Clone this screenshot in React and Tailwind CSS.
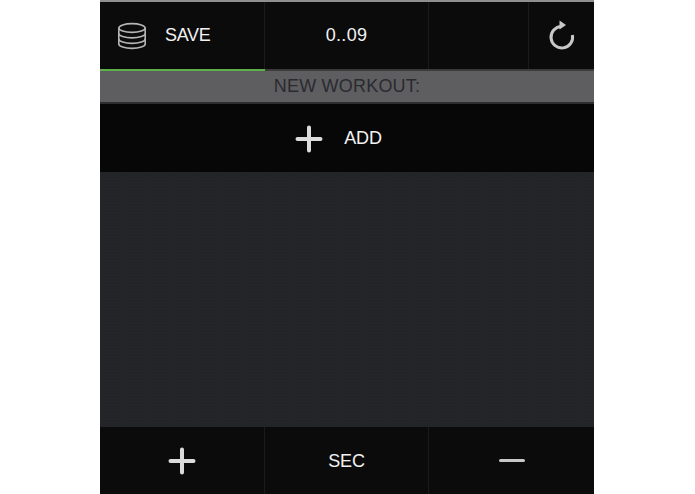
import React from "react";

const font = { fontFamily: '"Liberation Sans", Arial, sans-serif' };

const PlusIcon = ({ className }) => (
  <svg viewBox="0 0 28 28" className={className} fill="none" stroke="#dcdcdc" strokeWidth="4" strokeLinecap="round">
    <path d="M14 2.5v23M2.5 14h23" />
  </svg>
);

const DatabaseIcon = () => (
  <svg viewBox="0 0 30 28" className="w-[30px] h-[28px]" fill="none" stroke="#b5b5b5" strokeWidth="1.6">
    <ellipse cx="15" cy="6" rx="13.2" ry="4.4" />
    <path d="M1.8 6v16c0 2.4 5.9 4.4 13.2 4.4s13.2-2 13.2-4.4V6" />
    <path d="M1.8 11.5c0 2.4 5.9 4.4 13.2 4.4s13.2-2 13.2-4.4" />
    <path d="M1.8 17c0 2.4 5.9 4.4 13.2 4.4s13.2-2 13.2-4.4" />
  </svg>
);

const ReloadIcon = () => (
  <svg viewBox="0 0 26 32" className="w-[26px] h-[32px]" fill="none" stroke="#c8c8c8" strokeWidth="3">
    <path d="M12.5 6.4A10.8 10.8 0 1 0 23.4 15" />
    <path d="M17 5 10.5 0.5v9z" fill="#c8c8c8" stroke="none" />
  </svg>
);

const App = () => {
  return (
    <div className="w-[695px] h-[494px] bg-white flex pl-[100px] overflow-hidden" style={font}>
      <div className="w-[494px] h-full flex flex-col bg-[#0b0b0c]">
        {/* top bar */}
        <div className="h-[2px] bg-[#8f8f8f]" />
        <div className="h-[67px] flex text-[#f2f2f2] text-[18px] tracking-[-0.2px]">
          <div className="w-[165px] flex items-center pl-[17px] gap-[18px] border-r border-[#1b1b1c]">
            <DatabaseIcon />
            <span className="tracking-[-0.3px]">SAVE</span>
          </div>
          <div className="w-[164px] flex items-center justify-center border-r border-[#1b1b1c] tracking-[0.3px]">0..09</div>
          <div className="w-[100px] border-r border-[#1b1b1c]" />
          <div className="flex-1 flex items-center justify-center">
            <ReloadIcon />
          </div>
        </div>

        {/* progress */}
        <div className="h-[2px] bg-[#3b3b3c]">
          <div className="h-full w-[165px] bg-[#5cb04a]" />
        </div>

        {/* title */}
        <div className="h-[33px] flex items-center justify-center bg-[#5e5e60] border-b-2 border-[#2e2e2f] text-[18px] tracking-[0.2px] text-[#2a2a30]">
          NEW WORKOUT:
        </div>

        {/* add */}
        <div className="h-[68px] flex items-center justify-center gap-[21px] bg-[#070708] text-[#f2f2f2] text-[18px] tracking-[-0.2px] pr-[17px] pt-[1px]">
          <PlusIcon className="w-[28px] h-[28px]" />
          <span>ADD</span>
        </div>

        {/* list */}
        <div className="flex-1 bg-[#232427] bg-[radial-gradient(#27282b_1px,transparent_1px)] bg-[length:3px_3px]" />

        {/* bottom bar */}
        <div className="h-[67px] flex text-[#f2f2f2] text-[18px] tracking-[-0.2px]">
          <div className="w-[165px] flex items-center justify-center border-r border-[#1b1b1c]">
            <PlusIcon className="w-[28px] h-[28px]" />
          </div>
          <div className="w-[164px] flex items-center justify-center border-r border-[#1b1b1c] pt-[1px]">SEC</div>
          <div className="flex-1 flex items-center justify-center">
            <div className="w-[26px] h-[3px] rounded-full bg-[#c8c8c8]" />
          </div>
        </div>
      </div>
    </div>
  );
};

export default App;
